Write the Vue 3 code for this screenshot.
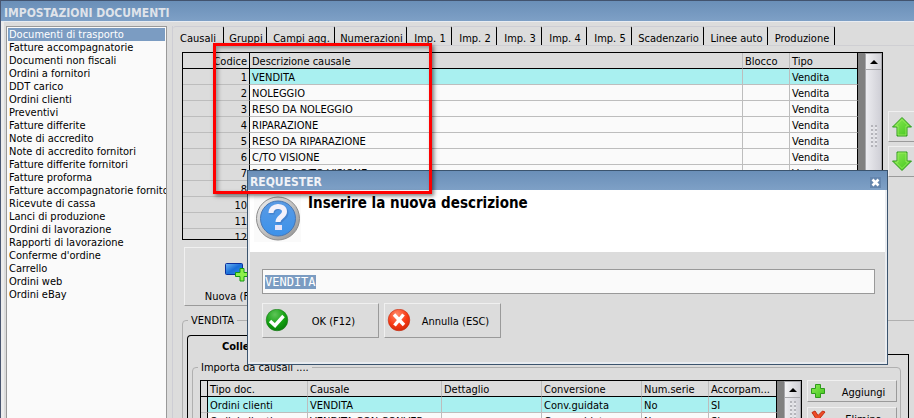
<script setup>
import { ref, onMounted } from 'vue'

const documents = [
  'Documenti di trasporto', 'Fatture accompagnatorie', 'Documenti non fiscali', 'Ordini a fornitori',
  'DDT carico', 'Ordini clienti', 'Preventivi', 'Fatture differite', 'Note di accredito',
  'Note di accredito fornitori', 'Fatture differite fornitori', 'Fatture proforma',
  'Fatture accompagnatorie fornito', 'Ricevute di cassa', 'Lanci di produzione',
  'Ordini di lavorazione', 'Rapporti di lavorazione', "Conferme d'ordine", 'Carrello',
  'Ordini web', 'Ordini eBay'
]
const selectedDocument = ref(0)

const tabs = [
  { label: 'Causali', size: 51 }, { label: 'Gruppi', size: 43 }, { label: 'Campi agg.', size: 68 },
  { label: 'Numerazioni', size: 72 }, { label: 'Imp. 1', size: 45 }, { label: 'Imp. 2', size: 45 },
  { label: 'Imp. 3', size: 45 }, { label: 'Imp. 4', size: 45 }, { label: 'Imp. 5', size: 45 },
  { label: 'Scadenzario', size: 72 }, { label: 'Linee auto', size: 64 }, { label: 'Produzione', size: 67 }
]
const activeTab = ref(0)

const causali = [
  [1, 'VENDITA'], [2, 'NOLEGGIO'], [3, 'RESO DA NOLEGGIO'], [4, 'RIPARAZIONE'],
  [5, 'RESO DA RIPARAZIONE'], [6, 'C/TO VISIONE'], [7, 'RESO DA C/TO VISIONE'],
  [8, ''], [10, ''], [11, ''], [12, '']
]
const imports = [
  ['Ordini clienti', 'VENDITA', '', 'Conv.guidata', 'No', 'SI'],
  ['Ordini clienti', 'VENDITA CON CONVER', '', 'Conv.guidata', 'No', 'SI']
]

const description = ref('VENDITA')
const field = ref(null)
onMounted(() => {
  field.value.focus()
  field.value.select()
})
</script>

<template>
  <main class="window">
    <h1 class="titlebar">IMPOSTAZIONI DOCUMENTI</h1>
    <div class="body">
      <ul class="sidebar">
        <li v-for="(doc, i) in documents" :key="doc">
          <button class="doc" :class="{ on: i === selectedDocument }" @click="selectedDocument = i">{{ doc }}</button>
        </li>
      </ul>

      <section class="panel">
        <nav class="tabs">
          <button v-for="(tab, i) in tabs" :key="tab.label" class="tab" :class="{ on: i === activeTab }"
            :style="{ flexBasis: tab.size + 'px' }" @click="activeTab = i">{{ tab.label }}</button>
        </nav>

        <div class="page">
          <div class="top">
            <div class="grid main-grid">
              <table>
                <colgroup><col class="c67"><col><col class="c47"><col class="c68"></colgroup>
                <thead>
                  <tr><th class="num">Codice</th><th>Descrizione causale</th><th>Blocco</th><th>Tipo</th></tr>
                </thead>
                <tbody>
                  <tr v-for="(row, i) in causali" :key="row[0]" :class="{ current: i === 0 }">
                    <td class="num">{{ row[0] }}</td><td>{{ row[1] }}</td><td></td><td>{{ row[0] < 8 ? 'Vendita' : '' }}</td>
                  </tr>
                </tbody>
              </table>
              <div class="gutter"></div>
              <div class="scroll">
                <button class="scroll-up" aria-label="Su"></button>
                <div class="thumb tall"><i class="grip"></i></div>
              </div>
            </div>
            <div class="movers">
              <button class="raised mover" aria-label="Sposta su">
                <svg width="22" height="22" viewBox="0 0 22 22"><path d="M11 1.5 20.5 11H16v9H6v-9H1.5Z" fill="url(#gr)" stroke="#2f9a1c" /><path d="M11 3.5 17.5 10H15v9H7v-9H4.500Z" fill="none" stroke="#a8f06a" opacity=".7" /></svg>
              </button>
              <button class="raised mover" aria-label="Sposta giù">
                <svg width="22" height="22" viewBox="0 0 22 22"><path d="M11 19.5 20.5 10H16V1H6v9H1.5Z" fill="url(#gr)" stroke="#2f9a1c" /><path d="M11 17.5 17.5 11H15V2H7v9H4.500Z" fill="none" stroke="#a8f06a" opacity=".7" /></svg>
              </button>
            </div>
          </div>

          <div class="toolbar">
            <button class="raised new">
              <svg width="26" height="20" viewBox="0 0 26 20">
                <rect x="1.5" y="1.5" width="17" height="11" rx="1" fill="url(#bl)" stroke="#0b2f9c" />
                <path d="M16 6.5h4v4h4.500v4H20v4.500h-4v-4.500h-4.500v-4H16Z" fill="#8df04a" stroke="#149a12" />
              </svg>
              <span>Nuova (F5)</span>
            </button>
          </div>

          <fieldset class="detail">
            <legend>VENDITA</legend>
            <div class="detail-body">
              <div class="inner-tab">Collegamenti</div>
              <div class="inner-page">
                <fieldset class="imports">
                  <legend>Importa da causali ....</legend>
                  <div class="imports-row">
                    <div class="grid sub-grid">
                      <table>
                        <colgroup><col class="c7"><col class="c100"><col><col class="c100"><col class="c100"><col class="c67"><col class="c68"></colgroup>
                        <thead>
                          <tr><th class="num"></th><th>Tipo doc.</th><th>Causale</th><th>Dettaglio</th><th>Conversione</th><th>Num.serie</th><th>Accorpam...</th></tr>
                        </thead>
                        <tbody>
                          <tr v-for="(row, i) in imports" :key="i" :class="{ current: i === 0 }">
                            <td class="num"></td><td v-for="(cell, j) in row" :key="j">{{ cell }}</td>
                          </tr>
                        </tbody>
                      </table>
                      <div class="gutter"></div>
                      <div class="scroll">
                        <button class="scroll-up" aria-label="Su"></button>
                        <div class="thumb"><i class="grip"></i></div>
                      </div>
                    </div>
                    <div class="actions">
                      <button class="raised action">
                        <svg width="16" height="16" viewBox="0 0 16 16"><path d="M5.5 1.5h5v4h4v5h-4v4h-5v-4h-4v-5h4Z" fill="url(#gr)" stroke="#2f9a1c" /></svg>
                        <span>Aggiungi</span>
                      </button>
                      <button class="raised action">
                        <svg width="16" height="16" viewBox="0 0 16 16"><path d="M2 2.5 5 1l3 4.500L12.500 1 15 2l-5 6 4 6-3 1.500-3.500-5L3.500 15 1 13.500 5.500 8Z" fill="#ee4a26" stroke="#c22c10" /></svg>
                        <span>Elimina</span>
                      </button>
                    </div>
                  </div>
                </fieldset>
              </div>
            </div>
          </fieldset>
        </div>
      </section>
    </div>

    <section class="dialog" role="dialog" aria-labelledby="req-title">
      <header class="dialog-bar">
        <h2 id="req-title">REQUESTER</h2>
        <button class="close" aria-label="Chiudi">
          <svg width="11" height="11" viewBox="0 0 11 11"><path d="M2.5 2.5 8.500 8.500M8.500 2.500 2.500 8.500" stroke="#fff" stroke-width="2.600" /></svg>
        </button>
      </header>
      <div class="prompt">
        <svg class="ask" width="47" height="47" viewBox="0 0 47 47">
          <rect width="47" height="47" fill="#fafafa" />
          <circle cx="24" cy="23.500" r="21.500" fill="url(#ring)" stroke="#8b8b8b" />
          <circle cx="24" cy="23.500" r="17.500" fill="url(#ask)" stroke="#4877b4" />
          <path d="M18 19.500c0-9 14-9 14-1.500 0 5.500-7 5.500-7 10.500" fill="none" stroke="#3a6fb8" stroke-width="5" opacity=".5" />
          <path d="M17 18c0-8.500 13.500-8.500 13.500-1.500 0 5.500-6.500 5-6.500 10.500" fill="none" stroke="#f3f1fb" stroke-width="5" />
          <rect x="21" y="30" width="7" height="5" fill="#e6e4f8" />
        </svg>
        <label for="req-input">Inserire la nuova descrizione</label>
      </div>
      <form class="entry" @submit.prevent>
        <input id="req-input" ref="field" v-model="description" type="text" spellcheck="false" autocomplete="off">
        <div class="choices">
          <button class="raised choice">
            <svg width="24" height="24" viewBox="0 0 24 24">
              <circle cx="12" cy="11" r="10.800" fill="url(#ok)" stroke="#1c7a1c" stroke-width=".6" />
              <path d="M5 12 10 16.500 18.500 7" fill="none" stroke="#fff" stroke-width="3.400" />
            </svg>
            <span>OK (F12)</span>
          </button>
          <button class="raised choice" type="button">
            <svg width="24" height="24" viewBox="0 0 24 24">
              <circle cx="12" cy="11" r="10.800" fill="url(#no)" stroke="#c03018" stroke-width=".6" />
              <path d="M7 5.500 17 16M16.500 5.500 7.500 16.500" fill="none" stroke="#fff" stroke-width="3.400" />
            </svg>
            <span>Annulla (ESC)</span>
          </button>
        </div>
      </form>
    </section>

    <div class="highlight"></div>

    <svg class="defs" width="0" height="0" aria-hidden="true">
      <defs>
        <linearGradient id="gr" x1="0" y1="0" x2="1" y2="1"><stop offset="0" stop-color="#8fec55" /><stop offset="1" stop-color="#3fc41c" /></linearGradient>
        <linearGradient id="bl" x1="0" y1="0" x2="1" y2="1"><stop offset="0" stop-color="#6fb6f4" /><stop offset=".5" stop-color="#1a6fd8" /><stop offset="1" stop-color="#2f8ae8" /></linearGradient>
        <linearGradient id="ring" x1="0" y1="0" x2="1" y2="1"><stop offset="0" stop-color="#f4f4f4" /><stop offset="1" stop-color="#8f8f8f" /></linearGradient>
        <linearGradient id="ask" x1="0" y1="0" x2="0" y2="1"><stop offset="0" stop-color="#5a9ae4" /><stop offset="1" stop-color="#3c92ea" /></linearGradient>
        <radialGradient id="ok" cx=".4" cy=".25" r=".8"><stop offset="0" stop-color="#5fc458" /><stop offset=".6" stop-color="#12a010" /><stop offset="1" stop-color="#0a7a0a" /></radialGradient>
        <radialGradient id="no" cx=".4" cy=".25" r=".8"><stop offset="0" stop-color="#ff8a6a" /><stop offset=".6" stop-color="#f83a14" /><stop offset="1" stop-color="#d02808" /></radialGradient>
      </defs>
    </svg>
  </main>
</template>

<style>
body { margin: 0; overflow: hidden; }
</style>

<style scoped>
* { box-sizing: border-box; }
.window {
  position: relative;
  display: flex;
  flex-direction: column;
  height: 100vh;
  overflow: hidden;
  background: #dcdcdc;
  border-left: 1px solid #4a5670;
  font: 11px/13px "DejaVu Sans Condensed", "DejaVu Sans", sans-serif;
  color: #000;
}
button, input { font: inherit; color: inherit; margin: 0; }
button { padding: 0; border: 0; background: none; white-space: nowrap; }
.titlebar {
  flex: none;
  height: 22px;
  margin: 0;
  padding: 4px 3px 0;
  border-top: 1px solid #42536e;
  border-bottom: 1px solid #e8ecf2;
  background: linear-gradient(#6a8fb8, #7ea0c6);
  color: #dfe3ea;
  font: bold 12px/17px "DejaVu Sans Condensed", "DejaVu Sans", sans-serif;
}
.body { flex: 1; display: flex; min-height: 0; padding-top: 4px; border-left: 3px solid #ececec; }
.sidebar {
  flex: none;
  width: 161px;
  margin: 0 0 0 2px;
  padding: 1px 1px 0;
  list-style: none;
  background: #fafafa;
  border: 1px solid #999;
  border-bottom: 0;
  overflow: hidden;
}
.doc { display: block; width: 100%; height: 13px; padding: 1px 0 0 1px; text-align: left; line-height: 12px; }
.doc.on { background: #7b9cc2; color: #fff; }
.panel { flex: 1; min-width: 0; margin-left: 5px; border-left: 1px solid #cdcdd4; }
.tabs { display: flex; height: 20px; border-bottom: 1px solid #cfcfd3; }
.tab {
  flex: 0 0 auto;
  padding: 5px 0 0 2px;
  border-top: 1px solid #cdcdd4;
  border-right: 1px solid #000;
  border-radius: 3px 2px 0 0;
}
.tab.on { padding: 3px 0 0; height: 20px; background: #dcdcdc; }
.page { padding: 6px 0 0 9px; }
.top { display: flex; gap: 5px; }
.grid { flex: 1; display: flex; min-width: 0; border: 1px solid #000; overflow: hidden; background: #fafafa; }
.main-grid { height: 188px; }
table { flex: 1; min-width: 0; width: 0; table-layout: fixed; border-collapse: separate; border-spacing: 0; align-self: flex-start; }
.c67 { width: 67px; } .c47 { width: 47px; } .c68 { width: 68px; } .c7 { width: 7px; } .c100 { width: 100px; }
th, td {
  height: 16px;
  padding: 2px 2px 0;
  border-right: 1px solid #bdbdbd;
  border-bottom: 1px solid #bdbdbd;
  font-weight: normal;
  text-align: left;
  line-height: 13px;
  white-space: nowrap;
}
th { background: #dcdcdc; border-bottom-color: #000; }
.num { background: #dcdcdc; text-align: right; border-right-color: #000; }
th:last-child, td:last-child { border-right-color: #000; }
.current td:not(.num) { background: #a9f0f0; }
.gutter { flex: none; width: 7px; background: #808080; }
.scroll { flex: none; width: 17px; display: flex; flex-direction: column; gap: 1px; padding: 1px; background: #a8a8ac; }
.scroll-up { flex: none; display: grid; place-items: center; height: 15px; background: linear-gradient(90deg, #f2f2f4, #d0d0d6); }
.scroll-up::before { content: ""; border: 4px solid transparent; border-top: 0; border-bottom-color: #000; }
.thumb { flex: 1; display: flex; justify-content: center; padding-top: 3px; background: linear-gradient(90deg, #ececf0, #cfcfd6); }
.thumb.tall { padding-top: 55px; }
.grip { width: 6px; height: 22px; background: repeating-linear-gradient(90deg, transparent 0 2px, #dedee3 2px 4px), repeating-linear-gradient(#b4b4ba 0 2px, #e8e8ec 2px 4px); }
.movers { flex: none; width: 27px; display: flex; flex-direction: column; gap: 4px; padding-top: 59px; margin-right: -1px; }
.raised { border: 1px solid; border-color: #f0f0f0 #9a9a9a #9a9a9a #f0f0f0; background: #dcdcdc; }
.mover { display: grid; place-items: center; height: 31px; }
.toolbar { display: flex; padding: 7px 0 0 2px; }
.new { display: flex; flex-direction: column; align-items: center; gap: 8px; width: 96px; height: 59px; padding-top: 14px; }
.new svg { margin-left: 10px; }
fieldset { min-width: 0; margin: 0; padding: 0; border: 1px solid #b0b0b0; border-radius: 4px; }
legend { margin-left: 5px; padding: 0 3px; line-height: 15px; }
.detail { margin: 7px -8px 0 0; }
.detail-body { height: 180px; padding: 7px 12px 0 4px; }
.inner-tab {
  width: 130px;
  height: 19px;
  padding: 4px 0 0 34px;
  border: 1px solid #000;
  border-bottom: 0;
  border-radius: 4px 4px 0 0;
  font-weight: bold;
}
.inner-page { height: 160px; padding: 6px 7px 0 4px; border: 1px solid #000; border-top: 0; background: linear-gradient(#000, #000) 130px 0 / 100% 1px no-repeat; }
.imports-row { display: flex; gap: 5px; padding: 5px 3px 0 7px; }
.sub-grid { height: 100px; }
.actions { flex: none; width: 90px; display: flex; flex-direction: column; gap: 5px; }
.action { display: flex; align-items: center; gap: 13px; height: 22px; padding-left: 2px; }
.action span { flex: 1; padding: 2px 8px 0 0; text-align: center; }

.dialog {
  position: absolute;
  top: 170px;
  left: 246px;
  right: 26px;
  height: 195px;
  display: flex;
  flex-direction: column;
  border: 1px solid #3b546e;
  background: #dcdcdc;
  box-shadow: inset 0 0 0 2px #e9ecf0;
}
.dialog-bar { display: flex; align-items: center; height: 19px; padding: 3px 6px 0 2px; background: linear-gradient(#6a8fb8, #7ea0c6); }
.dialog-bar h2 { flex: 1; margin: 0; font-size: 12px; line-height: 16px; color: #f0f2f6; }
.close { display: grid; width: 11px; height: 11px; background: #6486ae; }
.prompt { display: flex; gap: 7px; height: 62px; margin: 0 2px; padding: 5px 4px; background: #fff; }
.prompt label { font-size: 15px; line-height: 16px; font-weight: bold; }
.entry { padding: 17px 12px 0 14px; }
.entry input {
  display: block;
  width: 100%;
  height: 25px;
  padding: 0 2px;
  border: 1px solid #999;
  border-radius: 0;
  outline: none;
  background: #fafafa;
  font: 12px/16px "DejaVu Sans Mono", monospace;
}
.entry input::selection { background: #7b9cc2; color: #fff; }
.choices { display: flex; gap: 5px; margin-top: 9px; }
.choice { display: flex; align-items: center; width: 117px; height: 35px; padding-left: 2px; }
.choice span { flex: 1; padding: 2px 0 0; text-align: center; }
.highlight {
  position: absolute;
  top: 43px;
  left: 212px;
  width: 219px;
  height: 151px;
  border: 3px solid #f00;
  box-shadow: 2px 2px 4px rgba(0, 0, 0, .5), inset 2px 2px 4px rgba(0, 0, 0, .35);
  pointer-events: none;
}
.defs { position: absolute; }
</style>
